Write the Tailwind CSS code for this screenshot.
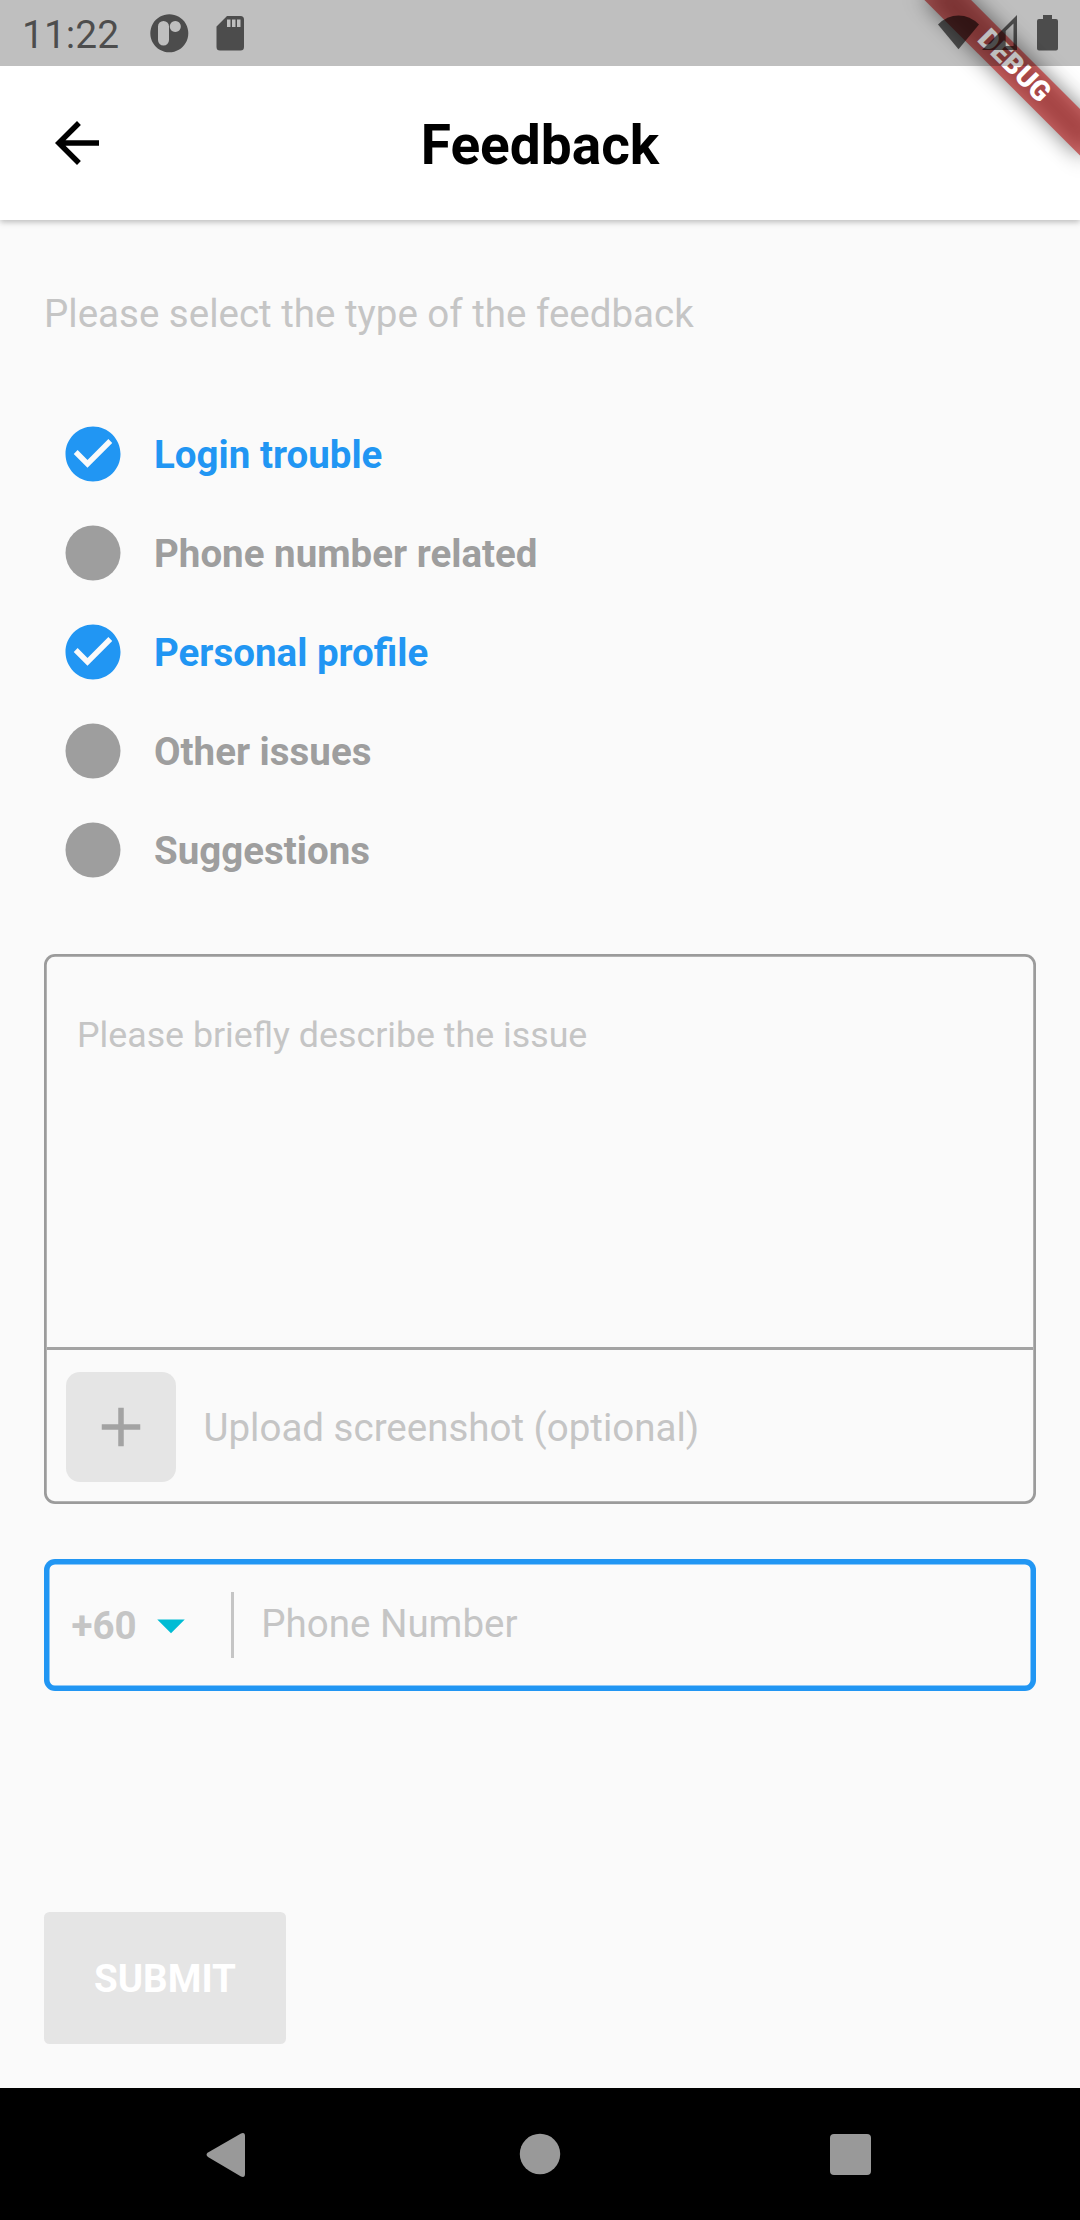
<!DOCTYPE html>
<html lang="en">
<head>
<meta charset="utf-8">
<title>Feedback</title>
<script src="https://cdn.jsdelivr.net/npm/@tailwindcss/browser@4"></script>
</head>
<body class="relative flex h-[2220px] w-[1080px] flex-col overflow-hidden bg-[#fafafa] font-['Roboto',sans-serif] text-[38.5px] leading-[45px]">

  <!-- App bar, with room for the status bar above it -->
  <header class="flex h-[220px] shrink-0 items-center bg-white pt-[66px] shadow-[0_2px_6px_rgba(0,0,0,0.26)]">
    <div class="w-[154px] pl-11">
      <svg class="size-[66px]" viewBox="0 0 24 24" fill="#000"><path d="M20 11H7.83l5.59-5.59L12 4l-8 8 8 8 1.41-1.41L7.83 13H20v-2z"/></svg>
    </div>
    <h1 class="flex-1 pt-[3px] text-center text-[55px] font-bold leading-[64px]">Feedback</h1>
    <div class="w-[154px]"></div>
  </header>

  <main class="flex flex-1 flex-col items-start px-11 pt-[71px]">
    <p class="text-[#c5c5c5]">Please select the type of the feedback</p>

    <ul class="mt-[85px] flex flex-col gap-[33px] pl-4 font-bold text-[#9e9e9e]">
      <li class="flex h-[66px] items-center gap-7 text-[#2196f3]">
        <svg class="size-[66px]" viewBox="0 0 24 24" fill="currentColor"><path d="M12 2C6.48 2 2 6.48 2 12s4.48 10 10 10 10-4.48 10-10S17.52 2 12 2zm-2 15l-5-5 1.41-1.41L10 14.17l7.59-7.59L19 8l-9 9z"/></svg>
        <span>Login trouble</span>
      </li>
      <li class="flex h-[66px] items-center gap-7">
        <svg class="size-[66px]" viewBox="0 0 24 24" fill="currentColor"><circle cx="12" cy="12" r="10"/></svg>
        <span>Phone number related</span>
      </li>
      <li class="flex h-[66px] items-center gap-7 text-[#2196f3]">
        <svg class="size-[66px]" viewBox="0 0 24 24" fill="currentColor"><path d="M12 2C6.48 2 2 6.48 2 12s4.48 10 10 10 10-4.48 10-10S17.52 2 12 2zm-2 15l-5-5 1.41-1.41L10 14.17l7.59-7.59L19 8l-9 9z"/></svg>
        <span>Personal profile</span>
      </li>
      <li class="flex h-[66px] items-center gap-7">
        <svg class="size-[66px]" viewBox="0 0 24 24" fill="currentColor"><circle cx="12" cy="12" r="10"/></svg>
        <span>Other issues</span>
      </li>
      <li class="flex h-[66px] items-center gap-7">
        <svg class="size-[66px]" viewBox="0 0 24 24" fill="currentColor"><circle cx="12" cy="12" r="10"/></svg>
        <span>Suggestions</span>
      </li>
    </ul>

    <!-- Description and upload -->
    <section class="mt-[71px] flex h-[550px] w-full flex-col rounded-[11px] text-[#c5c5c5] shadow-[inset_0_0_0_2.75px_#9b9b9b]">
      <p class="h-[393px] px-[33px] pt-[60px] text-[35.75px] leading-[42px]">Please briefly describe the issue</p>
      <div class="mx-[2.75px] h-[3px] bg-[#a3a3a3]"></div>
      <div class="flex flex-1 items-center gap-[27.5px] pl-[22px]">
        <div class="flex size-[110px] items-center justify-center rounded-[14px] bg-[#e5e5e5]">
          <svg class="size-[66px]" viewBox="0 0 24 24" fill="#a3a3a3"><path d="M19 13h-6v6h-2v-6H5v-2h6V5h2v6h6v2z"/></svg>
        </div>
        <span>Upload screenshot (optional)</span>
      </div>
    </section>

    <!-- Phone number -->
    <section class="mt-[55px] flex h-[132px] w-full items-center rounded-[11px] text-[#c5c5c5] shadow-[inset_0_0_0_5.5px_#2196f3]">
      <span class="w-[94px] pl-[27.5px] font-bold">+60</span>
      <svg class="size-[66px] shrink-0" viewBox="0 0 24 24" fill="#00bcd4"><path d="M7 10l5 5 5-5z"/></svg>
      <div class="ml-[27px] h-[66px] w-[2.75px] bg-[#c5c5c5]"></div>
      <span class="ml-[27.5px] pb-[3px]">Phone Number</span>
    </section>

    <button class="mt-[221px] h-[132px] w-[242px] rounded-[5.5px] bg-[#e5e5e5] font-bold text-white">SUBMIT</button>
  </main>

  <nav class="flex h-[132px] shrink-0 items-center justify-center bg-black">
    <svg class="h-[132px] w-[1080px]" viewBox="0 0 1080 132" fill="#999">
      <path d="M241 45.500L208 64.500Q205 66.700 208 69L241 88.500Q245 90 245 86V48Q245 44 241 45.500Z"/>
      <circle cx="540" cy="66" r="20.200"/>
      <rect x="830" y="46" width="41" height="41" rx="4"/>
    </svg>
  </nav>

  <!-- Corner ribbon -->
  <svg class="absolute right-0 top-0 size-[240px]" viewBox="-240 0 240 240">
    <defs><filter id="soft" x="-50%" y="-200%" width="200%" height="500%"><feGaussianBlur stdDeviation="10.9"/></filter></defs>
    <g transform="rotate(45)">
      <rect x="-110" y="77" width="220" height="33" fill="#000" fill-opacity=".5" filter="url(#soft)"/>
      <rect x="-110" y="77" width="220" height="33" fill="#b71c1c" fill-opacity=".627"/>
      <text x="0" y="102" text-anchor="middle" font-family="Roboto, sans-serif" font-size="28.050" font-weight="900" fill="#fff">DEBUG</text>
    </g>
  </svg>

  <!-- System status bar, translucent over the app -->
  <div class="absolute inset-x-0 top-0 flex h-[66px] items-center bg-black/25 pl-[22px] pr-[22px]">
    <span class="pt-[3px] text-[39px] leading-[46px] text-black/60">11:22</span>
    <svg class="ml-[29px] h-[66px] w-[100px]" viewBox="147 0 100 66" fill="#000" fill-opacity=".6">
      <path fill-rule="evenodd" d="M168.300 14.300a19 19 0 1 0 .01 0zM162.500 21a5.500 5.500 0 0 1 5.500 5.500v13.500a5.500 5.500 0 0 1-11 0v-13.500a5.500 5.500 0 0 1 5.500-5.500zM174.300 21a5.500 5.500 0 1 1-.01 0z"/>
      <path fill-rule="evenodd" d="M226 16H239.500Q243 16 243 19.500V47Q243 50.500 239.500 50.500H219Q215.500 50.500 215.500 47V26.500zM226 19.500v7.500h3.500v-7.500zM231 19.500v7.500h3.500v-7.500zM236 19.500v7.500h3.500v-7.500z"/>
    </svg>
    <svg class="ml-auto h-[66px] w-[128px]" viewBox="930 0 128 66" fill="#000" fill-opacity=".6">
      <path d="M958.500 49.300L938 24.500Q947 15.500 958.500 15.500T979 24.500z"/>
      <path fill-rule="evenodd" d="M982 50L1017 15V50zM1005.700 31V46H1013.500V23.500z"/>
      <path d="M1043 15h9v4h4q2 0 2 2v27.500q0 2-2 2h-17q-2 0-2-2V21q0-2 2-2h4z"/>
    </svg>
  </div>
</body>
</html>
